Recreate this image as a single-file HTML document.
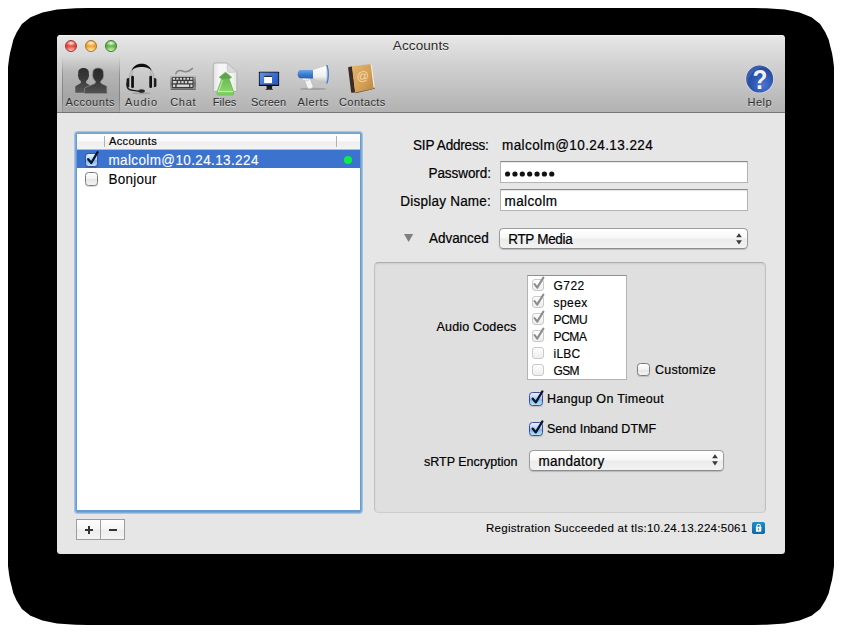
<!DOCTYPE html>
<html>
<head>
<meta charset="utf-8">
<title>Accounts</title>
<style>
html,body{margin:0;padding:0;}
body{width:842px;height:633px;overflow:hidden;background:#fff;position:relative;font-family:"Liberation Sans",sans-serif;font-size:13px;color:#000;}
div,span{box-sizing:border-box;}
.a{position:absolute;}
#shadow{position:absolute;left:0;top:0;width:842px;height:633px;}
#win{position:absolute;left:57px;top:35px;width:728px;height:519px;background:#e6e6e6;border-radius:4px 4px 3.5px 3.5px;overflow:hidden;}
#tb{position:absolute;left:0;top:0;width:728px;height:78px;background:linear-gradient(#e9e9e9 0px,#e0e0e0 10px,#d1d1d1 30px,#bcbcbc 62px,#b2b2b2 77px);border-bottom:1px solid #787878;box-shadow:inset 0 1px 0 #f4f4f4;}
#title{position:absolute;left:0;width:728px;top:3px;text-align:center;font-size:13.5px;color:#2a2a2a;line-height:15px;letter-spacing:.1px;text-shadow:0 1px 0 rgba(255,255,255,.6);}
.tl{position:absolute;top:5px;width:12px;height:12px;border-radius:50%;}
.tlab{position:absolute;top:60.5px;font-size:11px;color:#2e2e2e;line-height:13px;white-space:nowrap;text-shadow:0 1px 0 rgba(255,255,255,.55);}
#sel{position:absolute;left:5px;top:21px;width:58px;height:57px;background:linear-gradient(rgba(0,0,0,0) 0%,rgba(0,0,0,.11) 30%,rgba(0,0,0,.12) 70%,rgba(0,0,0,.05) 100%);}
#sel:before,#sel:after{content:"";position:absolute;top:0;width:1px;height:57px;background:linear-gradient(rgba(0,0,0,0),rgba(0,0,0,.2) 35%,rgba(0,0,0,.22) 75%,rgba(0,0,0,.08));}
#sel:before{left:0;}#sel:after{right:0;}
.lab{position:absolute;font-size:13px;line-height:16px;white-space:nowrap;color:#000;-webkit-text-stroke:.2px #000;}
.tall{transform:scaleY(1.085);transform-origin:50% 22%;}
.tall2{transform:scaleY(1.07);transform-origin:50% 82%;}
.field{position:absolute;background:#fff;border:1px solid #b4b4b4;border-top-color:#8a8a8a;box-shadow:inset 0 1px 1px rgba(0,0,0,.10);}
.popup{position:absolute;border:1px solid #9c9c9c;border-bottom-color:#8c8c8c;border-radius:4.5px;background:linear-gradient(#ffffff 0%,#f8f8f8 45%,#ececec 55%,#f2f2f2 100%);box-shadow:0 1px 1px rgba(0,0,0,.18);}
.cb{position:absolute;width:14px;height:14px;border:1px solid #7c7c7c;border-radius:3.5px;background:linear-gradient(#ffffff,#f2f2f2 50%,#e4e4e4 51%,#f4f4f4);box-shadow:0 1px 1px rgba(0,0,0,.15);}
.cb.on{border-color:#3f4c94;background:linear-gradient(#e6f0fb 0%,#b3d4f4 45%,#7fb9ee 55%,#b8e3fb 100%);}
.scb{position:absolute;width:12px;height:12px;border:1px solid #c9c9c9;border-radius:3px;background:linear-gradient(#fdfdfd,#ededed);}
.row{position:absolute;left:25.6px;font-size:12px;line-height:14px;white-space:nowrap;letter-spacing:.4px;-webkit-text-stroke:.15px #000;}
</style>
</head>
<body>
<svg id="shadow" viewBox="0 0 842 633">
<path d="M8 67 L9 59 L10 53 L11.7 46.5 L13.3 39.8 L16.6 32.5 L21.9 23.9 L30.5 17.3 L42.5 12.6 L57.1 9.6 L75.7 8.2 L88 8 L754 8 L766.3 8.2 L784.9 9.6 L799.5 12.6 L811.5 17.3 L820.1 23.9 L825.4 32.5 L828.7 39.8 L830.3 46.5 L832 53 L833 59 L834 67 L834 566 L833 574 L832 580 L830.3 586.5 L828.7 593.2 L825.4 600.5 L820.1 609.1 L811.5 615.7 L799.5 620.4 L784.9 623.4 L766.3 624.8 L754 625 L88 625 L75.7 624.8 L57.1 623.4 L42.5 620.4 L30.5 615.7 L21.9 609.1 L16.6 600.5 L13.3 593.2 L11.7 586.5 L10 580 L9 574 L8 566 Z" fill="#000"/>
</svg>
<div id="win">
  <div id="tb">
    <div class="tl" style="left:8px;background:radial-gradient(ellipse 48% 30% at 50% 22%,rgba(255,255,255,.9),rgba(255,255,255,0) 100%),radial-gradient(ellipse 70% 50% at 50% 98%,#ffc9c0,rgba(255,201,192,0) 100%),#e2463d;border:1px solid #a63a33;"></div>
    <div class="tl" style="left:28px;background:radial-gradient(ellipse 48% 30% at 50% 22%,rgba(255,255,255,.9),rgba(255,255,255,0) 100%),radial-gradient(ellipse 70% 50% at 50% 98%,#fff0b8,rgba(255,240,184,0) 100%),#eca233;border:1px solid #a9772a;"></div>
    <div class="tl" style="left:48px;background:radial-gradient(ellipse 48% 30% at 50% 22%,rgba(255,255,255,.9),rgba(255,255,255,0) 100%),radial-gradient(ellipse 70% 50% at 50% 98%,#d6f8c0,rgba(214,248,192,0) 100%),#60b346;border:1px solid #427f30;"></div>
    <div id="title">Accounts</div>
    <div id="sel"></div>
    <!--ICONS_START--><svg class="a" style="left:0;top:0;" width="728" height="78" viewBox="57 35 728 78">
<defs>
  <linearGradient id="gp" x1="0" y1="0" x2="0" y2="1"><stop offset="0" stop-color="#2a2a2a"/><stop offset=".45" stop-color="#333"/><stop offset="1" stop-color="#525252"/></linearGradient>
  <linearGradient id="gp2" x1="0" y1="0" x2="0" y2="1"><stop offset="0" stop-color="#2e2e2e"/><stop offset=".45" stop-color="#3a3a3a"/><stop offset="1" stop-color="#585858"/></linearGradient>
  <linearGradient id="gcup" x1="0" y1="0" x2="1" y2="0"><stop offset="0" stop-color="#777"/><stop offset=".5" stop-color="#dcdcdc"/><stop offset="1" stop-color="#8a8a8a"/></linearGradient>
  <linearGradient id="gcup2" x1="1" y1="0" x2="0" y2="0"><stop offset="0" stop-color="#777"/><stop offset=".5" stop-color="#dcdcdc"/><stop offset="1" stop-color="#8a8a8a"/></linearGradient>
  <linearGradient id="gkb" x1="0" y1="0" x2="0" y2="1"><stop offset="0" stop-color="#d6d6d6"/><stop offset=".18" stop-color="#a2a2a2"/><stop offset=".6" stop-color="#6e6e6e"/><stop offset=".9" stop-color="#8e8e8e"/><stop offset="1" stop-color="#5a5a5a"/></linearGradient>
  <linearGradient id="gpage" x1="0" y1="0" x2="1" y2="0"><stop offset="0" stop-color="#e2e2e2"/><stop offset=".25" stop-color="#f6f6f6"/><stop offset=".75" stop-color="#f6f6f6"/><stop offset="1" stop-color="#e4e4e4"/></linearGradient>
  <linearGradient id="ggreen" x1="0" y1="0" x2="0" y2="1"><stop offset="0" stop-color="#5fae4a"/><stop offset=".35" stop-color="#6fbf55"/><stop offset="1" stop-color="#8fdc6e"/></linearGradient>
  <linearGradient id="gscr" x1="0" y1="0" x2="1" y2=".5"><stop offset="0" stop-color="#6496e8"/><stop offset=".5" stop-color="#4276d6"/><stop offset="1" stop-color="#2f5fc4"/></linearGradient>
  <linearGradient id="gmb" x1="0" y1="0" x2="0" y2="1"><stop offset="0" stop-color="#6fa6e6"/><stop offset=".5" stop-color="#3b7fd2"/><stop offset="1" stop-color="#2a62b2"/></linearGradient>
  <linearGradient id="gmw" x1="0" y1="0" x2="0" y2="1"><stop offset="0" stop-color="#ffffff"/><stop offset=".6" stop-color="#f0f0f0"/><stop offset="1" stop-color="#b8b8b8"/></linearGradient>
  <linearGradient id="gbook" x1="0" y1="0" x2="1" y2="1"><stop offset="0" stop-color="#e4b46c"/><stop offset=".6" stop-color="#d39f55"/><stop offset="1" stop-color="#bd8841"/></linearGradient>
  <radialGradient id="ghelp" cx=".62" cy=".72" r=".75"><stop offset="0" stop-color="#4a74d6"/><stop offset=".55" stop-color="#2c55ae"/><stop offset="1" stop-color="#234694"/></radialGradient>
</defs>

<!-- Accounts: two people -->
<g>
  <path d="M75.3 92.8 L75.3 86.7 Q75.3 86.2 75.8 85.9 L80.2 83.6 Q81 83 80.9 82 L80.8 81 C79 79.6 78.3 77.8 78.2 76.5 C77.8 76.1 77.8 74.5 78.2 74.2 L78.2 72.6 C78.2 69.6 80.4 68 83.5 68 C86.6 68 88.8 69.6 88.8 72.6 L88.8 74.2 C89.2 74.5 89.2 76.1 88.8 76.5 C88.7 77.8 88 79.6 86.2 81 L86.1 82 Q86 83 86.8 83.6 L91.2 85.9 Q91.7 86.2 91.7 86.7 L91.7 92.8 Z" fill="url(#gp2)"/>
  <path d="M84.6 92.8 L84.6 88.8 Q84.6 88 85.5 87.5 L94.8 83.6 Q95.6 83 95.5 82 L95.4 81 C93.6 79.6 92.9 77.8 92.8 76.5 C92.4 76.1 92.4 74.5 92.8 74.2 L92.8 72.6 C92.8 69.6 95 68 98.1 68 C101.2 68 103.4 69.6 103.4 72.6 L103.4 74.2 C103.8 74.5 103.8 76.1 103.4 76.5 C103.3 77.8 102.6 79.6 100.8 81 L100.7 82 Q100.6 83 101.4 83.6 L106.4 85.9 Q106.9 86.2 106.9 86.7 L106.9 92.8 Z" fill="url(#gp)" stroke="#909090" stroke-width=".7"/>
  <path d="M84.6 92.8 L106.9 92.8" stroke="#2e2e2e" stroke-width=".8"/>
</g>

<!-- Audio: headset -->
<g>
  <ellipse cx="141.5" cy="93.3" rx="9.5" ry="1" fill="rgba(0,0,0,.14)"/>
  <path d="M131.3 71.4 C132.8 66.4 136.8 63.8 141.6 63.8 C146.4 63.8 150.4 66.4 151.9 71.4 C149.8 68 146.2 66.9 141.6 66.9 C137 66.9 133.4 68 131.3 71.4 Z" fill="#0c0c0c"/>
  <path d="M131.5 70.4 L133.2 71.5 L131.4 76.2 L129.1 75.7 Z" fill="#c6c6c6" stroke="#7a7a7a" stroke-width=".35"/>
  <path d="M151.7 70.4 L150 71.5 L151.8 76.2 L154.1 75.7 Z" fill="#c6c6c6" stroke="#7a7a7a" stroke-width=".35"/>
  <rect x="126.6" y="78" width="3.4" height="9.2" rx="1.6" fill="#1a1a1a"/>
  <rect x="129.1" y="76.4" width="2.4" height="11.2" rx=".8" fill="url(#gcup)"/>
  <rect x="131.2" y="75.8" width="2.7" height="12.3" rx="1.25" fill="#101010"/>
  <rect x="153.2" y="78" width="3.2" height="9.2" rx="1.6" fill="#1a1a1a"/>
  <rect x="151.7" y="76.4" width="2.4" height="11.2" rx=".8" fill="url(#gcup2)"/>
  <rect x="149.3" y="75.8" width="2.7" height="12.3" rx="1.25" fill="#101010"/>
  <path d="M127 82.8 C126.6 86.4 127 88.6 129.6 89.6 C132 90.4 135 90.7 138.6 91.1" fill="none" stroke="#1a1a1a" stroke-width="1.25" stroke-linecap="round"/>
  <ellipse cx="141.6" cy="91" rx="3.3" ry="1.75" fill="#262626"/>
</g>

<!-- Chat: keyboard -->
<g>
  <path d="M175.6 75 C176 71 179 69.6 182.4 71 C185.4 72.2 188.6 72.2 192.5 68.4" fill="none" stroke="#8a8a8a" stroke-width="1.5" stroke-linecap="round"/>
  <rect x="170.3" y="74.6" width="25.7" height="15.4" rx="1.2" fill="url(#gkb)"/>
  <rect x="172" y="77" width="21.4" height="11.3" rx="1.3" fill="#3a3a3a"/>
  <g fill="#d4d4d4">
    <rect x="172.9" y="77.7" width="2.2" height="2.1" rx=".4"/><rect x="176.3" y="77.7" width="2.2" height="2.1" rx=".4"/><rect x="179.8" y="77.7" width="2.2" height="2.1" rx=".4"/><rect x="183.3" y="77.7" width="2.2" height="2.1" rx=".4"/><rect x="186.8" y="77.7" width="2.2" height="2.1" rx=".4"/><rect x="190.1" y="77.7" width="2.4" height="2.1" rx=".4"/>
    <rect x="172.9" y="81.1" width="3.7" height="2.2" rx=".4"/><rect x="178" y="81.1" width="2.2" height="2.2" rx=".4"/><rect x="181.4" y="81.1" width="2.2" height="2.2" rx=".4"/><rect x="184.9" y="81.1" width="2.2" height="2.2" rx=".4"/><rect x="188.4" y="81.1" width="4.1" height="2.2" rx=".4"/>
    <rect x="172.9" y="84.6" width="2.4" height="2.4" rx=".4"/><rect x="176.6" y="84.6" width="12.6" height="2.4" rx=".4"/><rect x="190.3" y="84.6" width="2.2" height="2.4" rx=".4"/>
  </g>
</g>

<!-- Files -->
<g>
  <path d="M215 63 L227 63 L236.9 71.8 L236.9 90.2 Q236.9 91.6 235.4 91.6 L215 91.6 Q213.3 91.6 213.3 90.2 L213.3 64.5 Q213.3 63 215 63 Z" fill="url(#gpage)" stroke="#a6a6a6" stroke-width=".8"/>
  <path d="M227 63 L236.9 71.8 L229.8 72.6 Q227.6 72.6 227.3 70.4 Z" fill="#dadada" stroke="#b4b4b4" stroke-width=".5"/>
  <path d="M225.5 72.2 L231.3 76.9 Q231.8 77.6 230.9 77.9 L229 78.5 L229.4 79.6 L233.3 91 L233.5 94 Q233.5 94.9 232.5 94.9 L218.1 94.9 Q217.1 94.9 217.1 94 L217.3 91 L221.4 79.6 L221.8 78.5 L220 77.9 Q219.1 77.6 219.6 76.9 Z" fill="url(#ggreen)" stroke="#55a040" stroke-width=".6"/>
  <path d="M225.5 73 L230.5 77.3 L228.6 78.4 L222.2 78.4 L220.4 77.3 Z" fill="#5c9a4e" opacity=".75"/>
  <path d="M221.8 80 L223.2 80 L219.4 91 L217.9 91 Z" fill="#c0ecaa" opacity=".8"/>
  <path d="M217.4 91.2 L233.2 91.2 L233.3 94.3 L217.3 94.3 Z" fill="#80cf60"/>
  <path d="M217.6 91.5 L233 91.5" stroke="#c8f2b2" stroke-width=".9"/>
</g>

<!-- Screen -->
<g>
  <rect x="258.9" y="71.7" width="20.2" height="14.4" rx=".6" fill="#0a0a0a"/>
  <rect x="259.7" y="72.5" width="18.6" height="12.2" fill="url(#gscr)"/>
  <rect x="264.1" y="76" width="7.9" height="7.1" fill="#fff"/>
  <rect x="264.1" y="75.9" width="7.9" height="1" fill="#16161e"/>
  <path d="M266.4 86 L272.3 86 L271.9 88.6 L273.3 89.8 L265.1 89.8 L266.8 88.6 Z" fill="#1c1c1c"/>
</g>

<!-- Alerts: megaphone -->
<g>
  <ellipse cx="313" cy="88.9" rx="13.5" ry="1.2" fill="rgba(0,0,0,.16)"/>
  <g transform="translate(0 .7)">
  <path d="M303.4 77 L309.6 76.6 L313 85.2 Q313.5 86.9 311.8 87.5 L309.6 88.1 Q308 88.4 307.3 86.8 Z" fill="#f4f4f4" stroke="#b0b0b0" stroke-width=".6"/>
  <rect x="302.2" y="77" width="6.4" height="3" rx="1" fill="#ececec" stroke="#a8a8a8" stroke-width=".4"/>
  <path d="M300.6 69.4 Q297.9 69.7 297.7 73.5 Q297.9 77.2 300.6 77.5 L313.2 77.7 L313.2 69.2 Z" fill="url(#gmb)"/>
  <path d="M313 69.2 L326.4 65 L326.4 82.6 L313 77.7 Z" fill="url(#gmw)"/>
  <path d="M326.2 64.3 Q329.2 73.6 326.2 82.8 L327.6 82.8 Q330.4 73.6 327.6 64.3 Z" fill="#3c7fd4"/>
  </g>
</g>

<!-- Contacts: address book -->
<g transform="translate(362 78.6) rotate(-7) scale(.93) translate(-362 -78.6)">
  <path d="M352 64.6 L373 64.6 Q374.4 64.6 374.4 66 L374.4 89.6 L352 89.6 Z" fill="#f1ede6"/>
  <rect x="348.6" y="64.4" width="4.6" height="28" rx=".9" fill="#3d2a22"/>
  <path d="M352.8 64.2 L371.6 64.2 Q373.2 64.2 373.2 65.8 L373.2 90.6 L352.8 92.4 Z" fill="url(#gbook)"/>
  <path d="M352.8 92.4 L373.2 90.6 L374.4 89.8 L374.4 91.2 L353.2 93.4 Z" fill="#6b4a2c"/>
  <text x="363.2" y="80.6" font-family="Liberation Sans, sans-serif" font-size="13.5" fill="#f2dcb4" text-anchor="middle" opacity=".95">@</text>
</g>

<!-- Help -->
<g>
  <circle cx="759.7" cy="79.1" r="14.2" fill="#e4e4ea" opacity=".85"/>
  <circle cx="759.7" cy="79.1" r="13.5" fill="url(#ghelp)"/>
  <path d="M747.2 84 C749 74 756 67.4 766 67.2 C763 66 760.8 65.7 759.7 65.7 C752.3 65.7 746.3 71.7 746.3 79.1 C746.3 80.9 746.6 82.5 747.2 84 Z" fill="#5878c8" opacity=".45"/>
  <text x="759.9" y="88.9" font-family="Liberation Sans, sans-serif" font-weight="bold" font-size="27" fill="#f2f2f2" text-anchor="middle" transform="translate(759.9 0) scale(.9 1) translate(-759.9 0)">?</text>
</g>
</svg>
<!--ICONS_END-->
    <div class="tlab" style="left:8.5px;letter-spacing:.54px;">Accounts</div>
    <div class="tlab" style="left:68px;letter-spacing:1px;">Audio</div>
    <div class="tlab" style="left:113.2px;letter-spacing:.7px;">Chat</div>
    <div class="tlab" style="left:155.8px;letter-spacing:.08px;">Files</div>
    <div class="tlab" style="left:194px;letter-spacing:.06px;">Screen</div>
    <div class="tlab" style="left:240.6px;letter-spacing:.56px;">Alerts</div>
    <div class="tlab" style="left:282px;letter-spacing:.41px;">Contacts</div>
    <div class="tlab" style="left:690.6px;letter-spacing:.47px;">Help</div>
  </div>

  <!-- account list (window-relative coords: subtract 57,35) -->
  <div class="a" style="left:17px;top:96px;width:289px;height:383px;border-radius:4px;background:#a4c4e4;"></div>
  <div class="a" style="left:18px;top:97px;width:287px;height:381px;border-radius:3px;background:#7fabd8;"></div>
  <div class="a" style="left:19px;top:98px;width:285px;height:379px;border-radius:2px;background:#6a9bd0;"></div>
  <div class="a" id="list" style="left:20px;top:98px;width:283px;height:377px;background:#fff;border-top:1px solid #8d9aa8;overflow:hidden;">
    <div class="a" style="left:0;top:0;width:283px;height:16px;background:linear-gradient(#ffffff 0%,#fafafa 45%,#eeeeee 55%,#f3f3f3 100%);border-bottom:1px solid #b9b9b9;"></div>
    <div class="a" style="left:27px;top:2px;width:1px;height:11px;background:#b2b2b2;"></div>
    <div class="a" style="left:259px;top:2px;width:1px;height:11px;background:#b2b2b2;"></div>
    <div class="a" style="left:32px;top:1px;font-size:11px;line-height:13px;letter-spacing:.35px;color:#000;-webkit-text-stroke:.2px #000;">Accounts</div>
    <div class="a" style="left:0;top:16px;width:283px;height:18px;background:#3b73cf;"></div>
    <div class="cb on" style="left:7.5px;top:19px;width:13.5px;height:14px;"></div>
    <svg class="a" style="left:8px;top:15px;" width="16" height="18" viewBox="0 0 16 18"><path d="M3.2 10.2 L6.3 14 L12.6 3.2" fill="none" stroke="#0c1630" stroke-width="2.3" stroke-linecap="round" stroke-linejoin="round"/></svg>
    <div class="a tall2" style="left:31.4px;top:18.6px;font-size:13.5px;line-height:16px;letter-spacing:.38px;color:#fff;-webkit-text-stroke:.1px #fff;">malcolm@10.24.13.224</div>
    <div class="a" style="left:267px;top:22px;width:8.2px;height:8.2px;border-radius:50%;background:#08ee42;"></div>
    <div class="cb" style="left:7.5px;top:38px;width:13.5px;height:14px;"></div>
    <div class="a tall2" style="left:31.4px;top:37.6px;font-size:13.5px;line-height:16px;letter-spacing:.25px;color:#000;-webkit-text-stroke:.1px #000;">Bonjour</div>
  </div>

  <!-- +/- -->
  <div class="a" style="left:19px;top:484px;width:25px;height:21px;border:1px solid #9d9d9d;background:linear-gradient(#fdfdfd 0%,#f6f6f6 48%,#ededed 52%,#f4f4f4 100%);"></div>
  <div class="a" style="left:43px;top:484px;width:25px;height:21px;border:1px solid #9d9d9d;background:linear-gradient(#fdfdfd 0%,#f6f6f6 48%,#ededed 52%,#f4f4f4 100%);"></div>
  <div class="a" style="left:28px;top:494px;width:8px;height:2px;background:#333;"></div>
  <div class="a" style="left:31px;top:491px;width:2px;height:8px;background:#333;"></div>
  <div class="a" style="left:52px;top:494px;width:8px;height:2px;background:#333;"></div>

  <!-- right form -->
  <div class="lab tall" style="left:356px;top:102px;font-size:13.5px;letter-spacing:-.18px;">SIP Address:</div>
  <div class="lab tall" style="left:445px;top:102px;font-size:13.5px;letter-spacing:.42px;">malcolm@10.24.13.224</div>
  <div class="lab tall" style="left:371.5px;top:130px;font-size:13.5px;letter-spacing:-.07px;">Password:</div>
  <div class="field" style="left:443px;top:126px;width:248px;height:22px;"></div>
  <div class="lab tall" style="left:343.3px;top:158px;font-size:13.5px;letter-spacing:.23px;">Display Name:</div>
  <div class="field" style="left:443px;top:154px;width:248px;height:22px;"></div>
  <div class="lab tall" style="left:447.5px;top:158px;font-size:13.5px;letter-spacing:.39px;">malcolm</div>
  <svg class="a" style="left:447px;top:135px;" width="52" height="8" viewBox="0 0 52 8"><g fill="#111"><circle cx="3.6" cy="4" r="2.6"/><circle cx="10.96" cy="4" r="2.6"/><circle cx="18.32" cy="4" r="2.6"/><circle cx="25.68" cy="4" r="2.6"/><circle cx="33.04" cy="4" r="2.6"/><circle cx="40.4" cy="4" r="2.6"/><circle cx="47.76" cy="4" r="2.6"/></g></svg>

  <svg class="a" style="left:346px;top:198px;" width="11" height="10" viewBox="0 0 11 10"><path d="M1 1 L10.2 1 L5.6 9 Z" fill="#7f7f7f"/></svg>
  <div class="lab tall" style="left:372px;top:195px;font-size:13.5px;letter-spacing:-.04px;">Advanced</div>
  <div class="popup" style="left:442px;top:193px;width:249px;height:21px;"></div>
  <div class="lab tall" style="left:451.2px;top:196px;font-size:13.5px;letter-spacing:-.31px;">RTP Media</div>
  <svg class="a" style="left:677.6px;top:197.8px;" width="8" height="12" viewBox="0 0 8 12"><path d="M4 .2 L6.9 4.3 L1.1 4.3 Z M4 11.4 L6.9 7.3 L1.1 7.3 Z" fill="#3a3a3a"/></svg>

  <!-- group box -->
  <div class="a" style="left:317px;top:227px;width:392px;height:251px;border-radius:4.5px;background:#dfdfdf;border:1px solid #c0c0c0;border-top-color:#adadad;border-bottom-color:#cdcdcd;box-shadow:inset 0 1px 2px rgba(0,0,0,.08);"></div>
  <div class="lab" style="left:379.5px;top:284px;font-size:12.5px;letter-spacing:.18px;">Audio Codecs</div>
  <div class="a" id="codecs" style="left:470px;top:240px;width:100px;height:105px;background:#fff;border:1px solid #b3b3b3;border-top-color:#8f8f8f;">
    <div class="scb" style="left:4.4px;top:3px;"></div><div class="row" style="top:3px;">G722</div>
    <div class="scb" style="left:4.4px;top:20px;"></div><div class="row" style="top:20px;">speex</div>
    <div class="scb" style="left:4.4px;top:37px;"></div><div class="row" style="top:37px;letter-spacing:-.45px;">PCMU</div>
    <div class="scb" style="left:4.4px;top:54px;"></div><div class="row" style="top:54px;letter-spacing:-.45px;">PCMA</div>
    <div class="scb" style="left:4.4px;top:71px;"></div><div class="row" style="top:71px;letter-spacing:.2px;">iLBC</div>
    <div class="scb" style="left:4.4px;top:88px;"></div><div class="row" style="top:88px;letter-spacing:-.7px;">GSM</div>
    <svg class="a" style="left:3.3px;top:-1px;" width="16" height="70" viewBox="0 0 16 70"><g fill="none" stroke="#8c8c8c" stroke-width="2.05" stroke-linecap="round" stroke-linejoin="round"><path d="M3.5 9 L6.2 12.6 L12.4 2.6"/><path d="M3.5 26 L6.2 29.6 L12.4 19.6"/><path d="M3.5 43 L6.2 46.6 L12.4 36.6"/><path d="M3.5 60 L6.2 63.6 L12.4 53.6"/></g></svg>
  </div>
  <div class="cb" style="left:580px;top:328px;width:13px;height:13px;"></div>
  <div class="lab" style="left:598px;top:327px;font-size:12.5px;letter-spacing:.22px;">Customize</div>

  <div class="cb on" style="left:472px;top:357px;width:14px;height:13.5px;"></div>
  <svg class="a" style="left:472px;top:353px;" width="17" height="18" viewBox="0 0 17 18"><path d="M3.6 10.6 L6.8 14.4 L13.4 3.4" fill="none" stroke="#0c1630" stroke-width="2.3" stroke-linecap="round" stroke-linejoin="round"/></svg>
  <div class="lab" style="left:490px;top:355.5px;font-size:12.5px;letter-spacing:.3px;">Hangup On Timeout</div>

  <div class="cb on" style="left:472px;top:387px;width:14px;height:13.5px;"></div>
  <svg class="a" style="left:472px;top:383px;" width="17" height="18" viewBox="0 0 17 18"><path d="M3.6 10.6 L6.8 14.4 L13.4 3.4" fill="none" stroke="#0c1630" stroke-width="2.3" stroke-linecap="round" stroke-linejoin="round"/></svg>
  <div class="lab" style="left:490px;top:385.5px;font-size:12.5px;letter-spacing:.0px;">Send Inband DTMF</div>

  <div class="lab" style="left:367px;top:418.5px;font-size:12.5px;letter-spacing:.0px;">sRTP Encryption</div>
  <div class="popup" style="left:472px;top:415px;width:194.5px;height:20.5px;"></div>
  <div class="lab tall" style="left:481.5px;top:417.5px;font-size:13.5px;letter-spacing:.25px;">mandatory</div>
  <svg class="a" style="left:653.8px;top:419.4px;" width="8" height="12" viewBox="0 0 8 12"><path d="M4 .2 L6.9 4.3 L1.1 4.3 Z M4 11.4 L6.9 7.3 L1.1 7.3 Z" fill="#3a3a3a"/></svg>

  <!-- status -->
  <div class="lab" style="left:429px;top:486px;font-size:11.5px;line-height:14px;letter-spacing:.27px;-webkit-text-stroke:.1px #000;">Registration Succeeded at tls:10.24.13.224:5061</div>
  <svg class="a" style="left:695px;top:487px;" width="13" height="12" viewBox="0 0 13 12">
    <defs><linearGradient id="lk" x1="0" y1="0" x2="0" y2="1"><stop offset="0" stop-color="#1a8fd0"/><stop offset="1" stop-color="#0a6aa6"/></linearGradient></defs>
    <rect x="0" y="0" width="13" height="12" rx="1.8" fill="url(#lk)"/>
    <path d="M4.9 5 V3.9 A1.7 1.7 0 0 1 8.3 3.9 V5" fill="none" stroke="#fff" stroke-width="1.1"/>
    <rect x="3.9" y="4.8" width="5.4" height="5" rx=".5" fill="#fff"/>
    <rect x="6.2" y="6.2" width=".9" height="2.2" fill="#1478b4"/>
  </svg>
</div>
</body>
</html>
